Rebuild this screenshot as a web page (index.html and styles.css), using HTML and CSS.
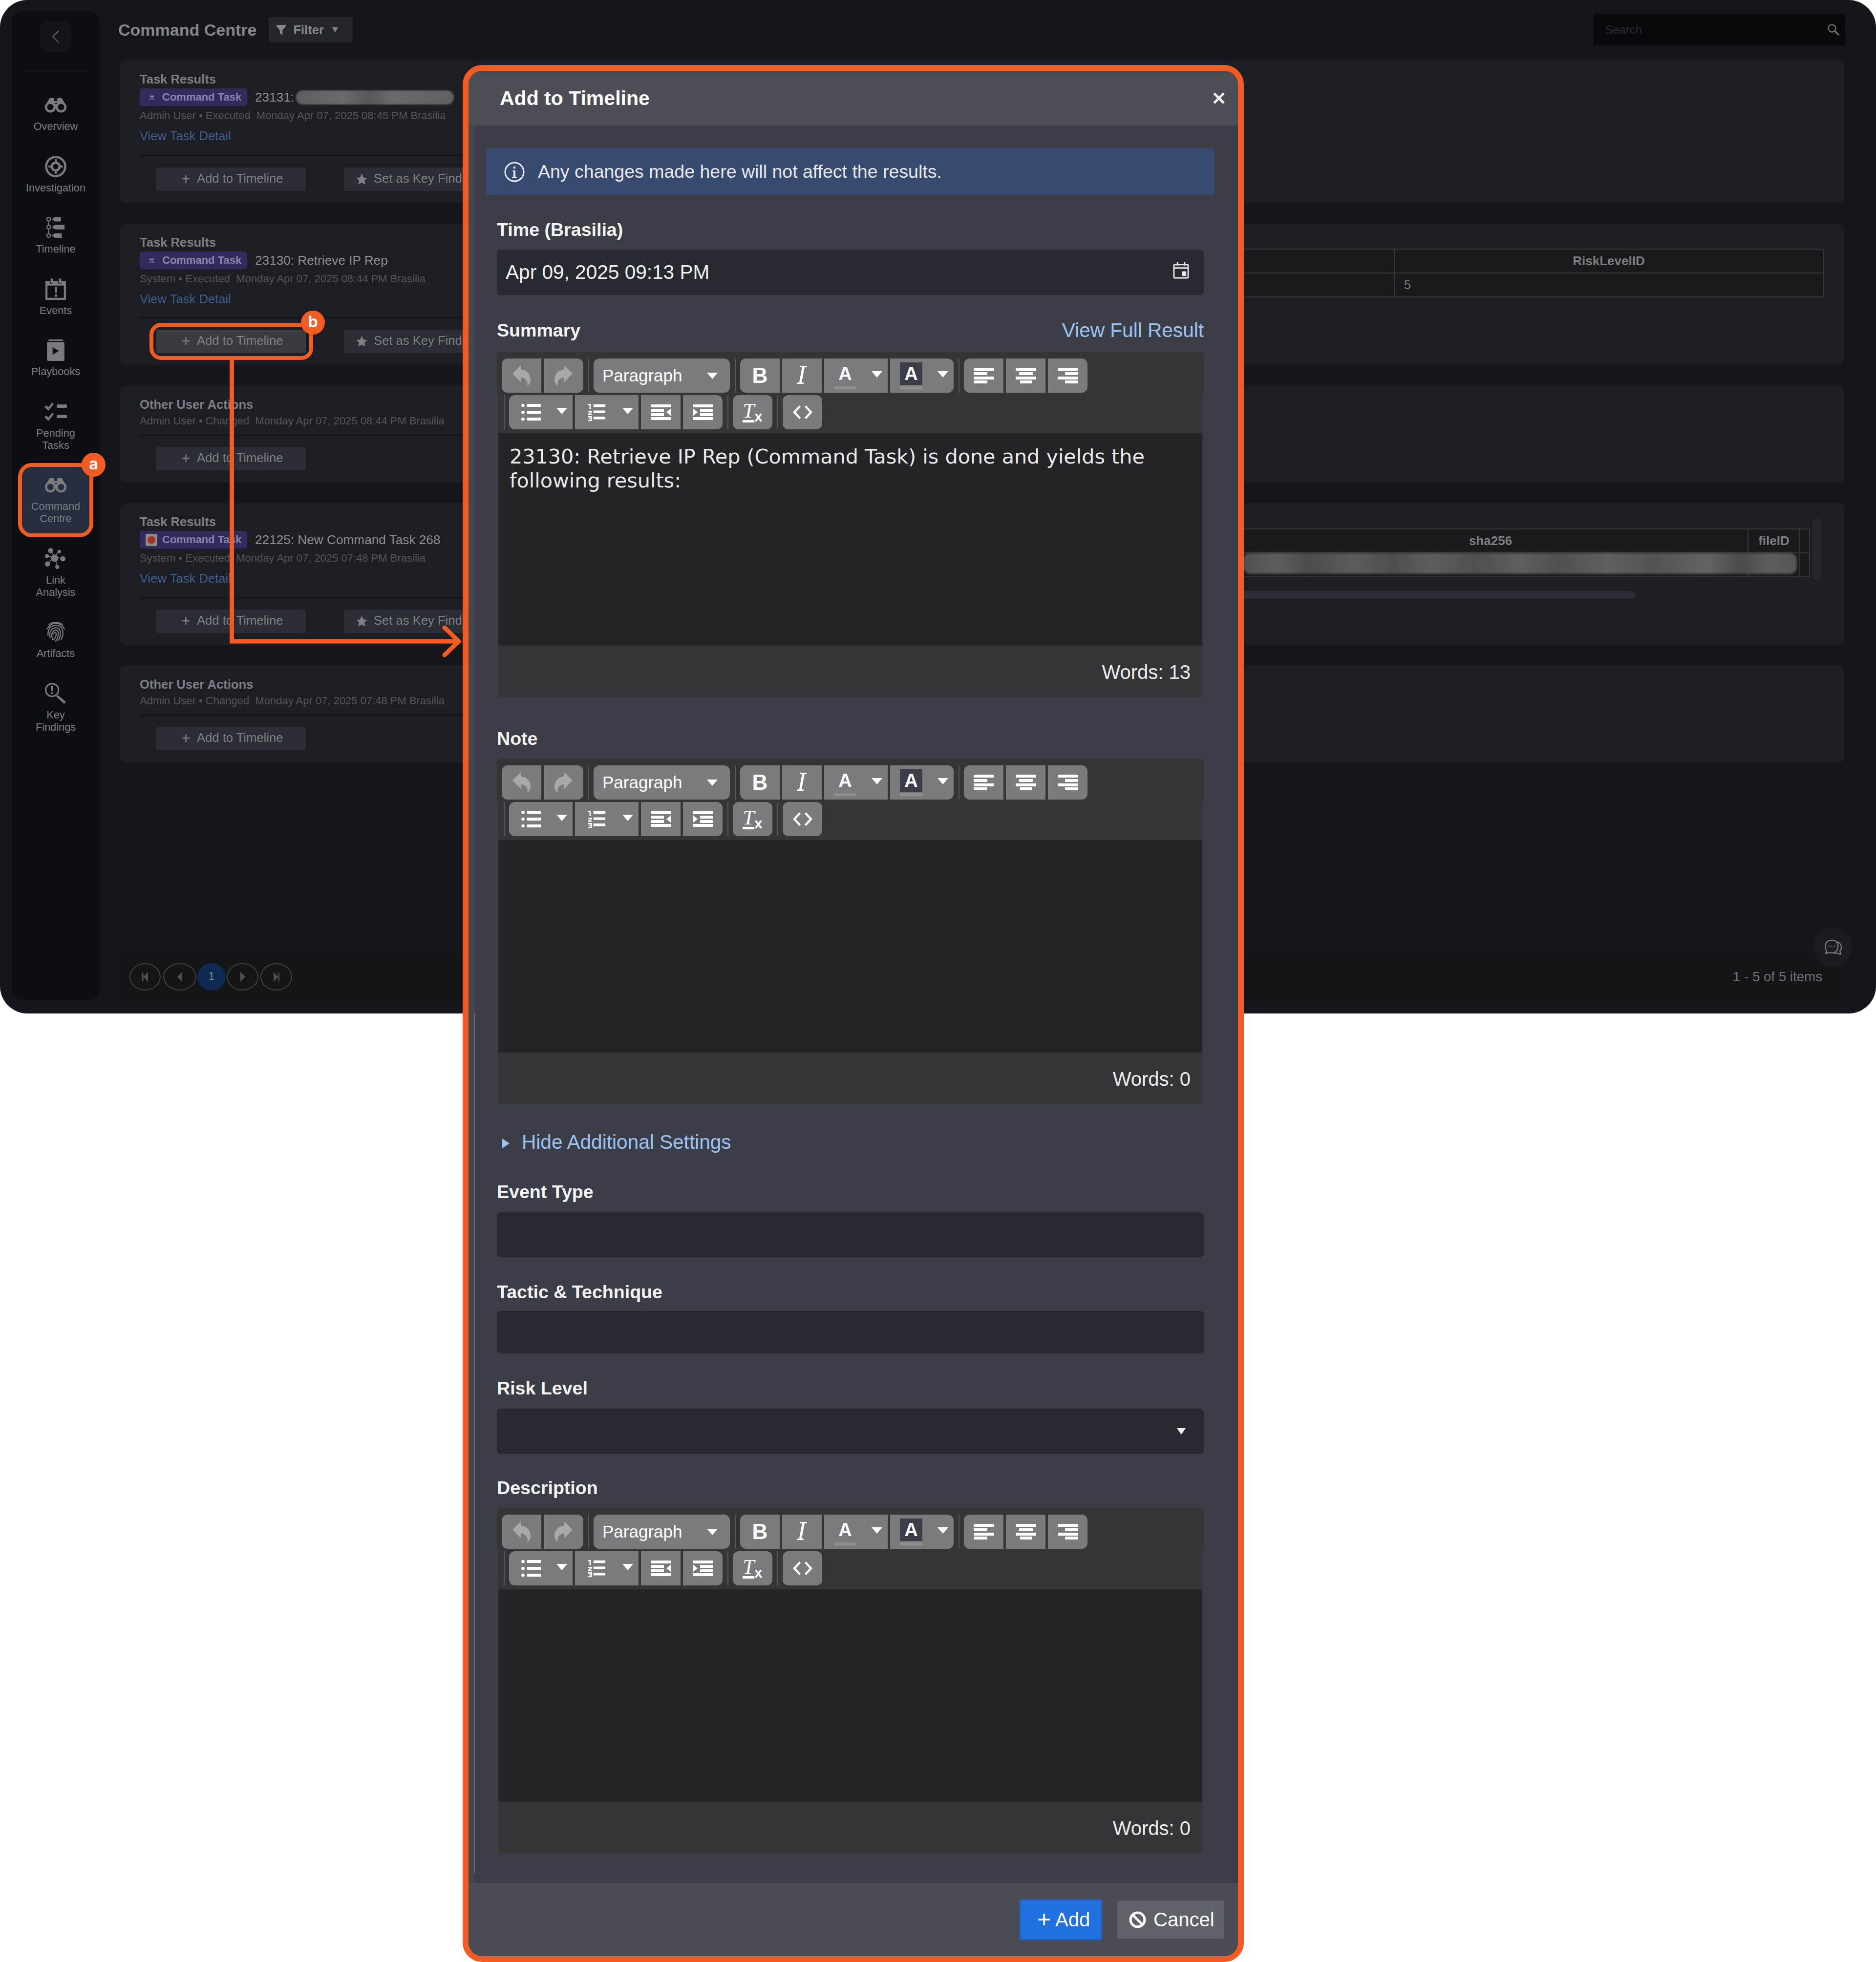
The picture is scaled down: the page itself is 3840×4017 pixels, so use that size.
FILE: index.html
```html
<!DOCTYPE html>
<html lang="en">
<head>
<meta charset="utf-8">
<title>Add to Timeline</title>
<link rel="stylesheet" href="styles.css">
</head>
<body>
<svg class="defs" width="0" height="0" aria-hidden="true">
  <symbol id="i-bino" viewBox="0 0 44 30"><path d="M3 14 9 3q1-2 4-2h3q3 0 3 3v3h6V4q0-3 3-3h3q3 0 4 2l6 11-6-2-7 1-1-2h-6l-1 2-7-1z"/><circle cx="11.500" cy="19" r="8.500" fill="none" stroke="currentColor" stroke-width="4.500"/><circle cx="32.500" cy="19" r="8.500" fill="none" stroke="currentColor" stroke-width="4.500"/><path d="M19 13h6v6h-6z"/></symbol>
  <symbol id="i-target" viewBox="0 0 44 44"><circle cx="22" cy="22" r="19.500" fill="none" stroke="currentColor" stroke-width="4.500"/><circle cx="22" cy="22" r="8" fill="none" stroke="currentColor" stroke-width="5"/><path d="M22 7v8M22 29v8M7 22h8M29 22h8" stroke="currentColor" stroke-width="4"/></symbol>
  <symbol id="i-timeline" viewBox="0 0 42 46"><g fill="none" stroke="currentColor" stroke-width="2.500"><circle cx="6" cy="5" r="4"/><circle cx="6" cy="22" r="4"/><circle cx="6" cy="40" r="4"/><path d="M6 9v9M6 26v10"/></g><path d="M13 5l6-5h13v10H19zM13 22l6-5h21v10H19zM13 40l6-5h15v10H19z"/></symbol>
  <symbol id="i-cal" viewBox="0 0 40 42"><path fill-rule="evenodd" d="M0 5h9v5h6V5h10v5h6V5h9v37H0zM4 14v24h32V14z"/><rect x="10" y="0" width="5" height="9" rx="2.500"/><rect x="26" y="0" width="5" height="9" rx="2.500"/><path d="M18 17h5l-1 11h-3zM18 31h5v5h-5z"/></symbol>
  <symbol id="i-book" viewBox="0 0 34 42"><path d="M3 0h28v3H3z"/><path fill-rule="evenodd" d="M2 5h30q2 0 2 2v33q0 2-2 2H3q-3 0-3-3V7q0-2 2-2zM11 15v15l12-7.500z"/></symbol>
  <symbol id="i-pending" viewBox="0 0 46 38"><path d="M0 9l4-3 4 4 8-10 3 3-11 14zM0 30l4-3 4 4 8-10 3 3-11 14z"/><rect x="25" y="4" width="21" height="7" rx="2"/><rect x="25" y="25" width="21" height="7" rx="2"/></symbol>
  <symbol id="i-link" viewBox="0 0 42 42"><g stroke="currentColor" stroke-width="1.500"><path d="M19 17 11 5M19 17 28 5M19 17 4 16M19 17 35 21M19 17 5 30M19 17 24 36"/></g><circle cx="19" cy="20" r="7"/><circle cx="11" cy="5" r="5"/><circle cx="28" cy="7" r="3.500"/><circle cx="4" cy="16" r="4"/><circle cx="35" cy="21" r="5"/><circle cx="5" cy="31" r="5"/><circle cx="24" cy="37" r="4"/></symbol>
  <symbol id="i-finger" viewBox="0 0 36 42"><g fill="none" stroke="currentColor" stroke-width="2.200" stroke-linecap="round"><path d="M5 6Q18-2 31 6"/><path d="M1 15Q8 4 18 4q11 0 17 11"/><path d="M3 27Q2 9 18 8q15 0 14 18-1 6-3 9"/><path d="M7 32Q4 14 18 12.500 28 13 27 25q0 6-4 13"/><path d="M12 36Q7 20 18 17q6 1 5 8 0 7-5 14"/><path d="M14 24q3-5 5 0 0 7-5 12"/></g></symbol>
  <symbol id="i-key" viewBox="0 0 42 42"><circle cx="14" cy="14" r="12.500" fill="none" stroke="currentColor" stroke-width="3"/><path d="M25 24l16 13-3.500 4L22 27z"/><path d="M12 6h4l-.500 10h-3zM12 18.500h4V22h-4z"/></symbol>
  <symbol id="i-undo" viewBox="0 0 37 42"><path d="M0 17 17 0v9c12 0 20 9 20 21 0 5-3 10-7 12 3-9-3-17-13-17v9z"/></symbol>
  <symbol id="i-redo" viewBox="0 0 37 42"><path d="M37 17 20 0v9C8 9 0 18 0 30c0 5 3 10 7 12-3-9 3-17 13-17v9z"/></symbol>
  <symbol id="i-left" viewBox="0 0 42 32"><path d="M0 0h42v6H0zM0 9h28v6H0zM0 18h42v6H0zM0 26h28v6H0z"/></symbol>
  <symbol id="i-center" viewBox="0 0 42 32"><path d="M0 0h42v6H0zM7 9h28v6H7zM0 18h42v6H0zM9 26h24v6H9z"/></symbol>
  <symbol id="i-right" viewBox="0 0 42 32"><path d="M0 0h42v6H0zM15 9h27v6H15zM0 18h42v6H0zM15 26h27v6H15z"/></symbol>
  <symbol id="i-ul" viewBox="0 0 40 36"><circle cx="3.500" cy="4" r="3.300"/><circle cx="3.500" cy="18" r="3.300"/><circle cx="3.500" cy="32" r="3.300"/><path d="M12 1h28v6H12zM12 15h28v6H12zM12 29h28v6H12z"/></symbol>
  <symbol id="i-ol" viewBox="0 0 40 40"><path d="M0 1h6v12H3V4H0zM0 17h9v2l-5 5h5v2H0v-2l5-5H0zM0 29h9v11H0v-2h6v-2H2v-2h4v-2H0z"/><path d="M12 2h27v6H12zM12 16h27v6H12zM12 30h27v6H12z"/></symbol>
  <symbol id="i-out" viewBox="0 0 42 32"><path d="M0 0h42v6H0zM0 9h27v6H0zM0 18h27v6H0zM0 26h42v6H0zM42 8v16L32 16z"/></symbol>
  <symbol id="i-in" viewBox="0 0 42 32"><path d="M0 0h42v6H0zM15 9h27v6H15zM15 18h27v6H15zM0 26h42v6H0zM0 8v16l10-8z"/></symbol>
  <symbol id="i-code" viewBox="0 0 40 28"><path d="M13 0l3 3L6 14l10 11-3 3L0 14zM27 0l-3 3 10 11-10 11 3 3 13-14z"/></symbol>
  <symbol id="i-star" viewBox="0 0 24 24"><path d="M12 0l3.600 8 8.400 1-6.200 5.700 1.700 8.600-7.500-4.300-7.500 4.300 1.700-8.600L0 9l8.400-1z"/></symbol>
  <symbol id="i-funnel" viewBox="0 0 20 22"><path d="M0 0h20v3l-7 8v11l-6-4v-7L0 3z"/></symbol>
</svg>

<div class="app">
  <aside class="sidebar">
    <div class="back"><svg class="back-ico" viewBox="0 0 16 28"><path d="M14 2 2 14l12 12" fill="none" stroke="currentColor" stroke-width="2.200"/></svg></div>
    <div class="side-rule"></div>
    <nav class="nav">
      <a class="nav-item"><svg class="nav-ico"><use href="#i-bino"/></svg><span>Overview</span></a>
      <a class="nav-item"><svg class="nav-ico"><use href="#i-target"/></svg><span>Investigation</span></a>
      <a class="nav-item"><svg class="nav-ico"><use href="#i-timeline"/></svg><span>Timeline</span></a>
      <a class="nav-item"><svg class="nav-ico"><use href="#i-cal"/></svg><span>Events</span></a>
      <a class="nav-item"><svg class="nav-ico"><use href="#i-book"/></svg><span>Playbooks</span></a>
      <a class="nav-item"><svg class="nav-ico"><use href="#i-pending"/></svg><span>Pending<br>Tasks</span></a>
      <a class="nav-item nav-item--active"><svg class="nav-ico"><use href="#i-bino"/></svg><span>Command<br>Centre</span><b class="pin pin--a">a</b></a>
      <a class="nav-item"><svg class="nav-ico"><use href="#i-link"/></svg><span>Link<br>Analysis</span></a>
      <a class="nav-item"><svg class="nav-ico"><use href="#i-finger"/></svg><span>Artifacts</span></a>
      <a class="nav-item"><svg class="nav-ico"><use href="#i-key"/></svg><span>Key<br>Findings</span></a>
    </nav>
  </aside>

  <main class="main">
    <header class="topbar">
      <h1 class="page-title">Command Centre</h1>
      <button class="filter"><svg class="filter-ico"><use href="#i-funnel"/></svg><span>Filter</span><i class="filter-caret"></i></button>
      <div class="search"><span>Search</span><svg class="search-ico" viewBox="0 0 26 26"><circle cx="10" cy="10" r="7.500" fill="none" stroke="currentColor" stroke-width="2.500"/><path d="M15 15l9 9" stroke="currentColor" stroke-width="3.500"/></svg></div>
    </header>

    <section class="cards">
      <article class="card card--one">
        <div class="card-left">
          <div class="card-title">Task Results</div>
          <div class="badge-row"><span class="badge"><i class="badge-mark">⌘</i>Command Task</span><span class="task-name">23131:</span><span class="blur-name"></span></div>
          <div class="meta">Admin User • Executed&nbsp; Monday Apr 07, 2025 08:45 PM Brasilia</div>
          <a class="detail">View Task Detail</a>
          <div class="card-rule"></div>
          <div class="actions"><button class="act"><span class="plus">+</span>Add to Timeline</button><button class="act act--key"><svg class="star"><use href="#i-star"/></svg>Set as Key Findings</button></div>
        </div>
      </article>

      <article class="card card--two">
        <div class="card-left">
          <div class="card-title">Task Results</div>
          <div class="badge-row"><span class="badge"><i class="badge-mark">⌘</i>Command Task</span><span class="task-name">23130: Retrieve IP Rep</span></div>
          <div class="meta">System • Executed&nbsp; Monday Apr 07, 2025 08:44 PM Brasilia</div>
          <a class="detail">View Task Detail</a>
          <div class="card-rule"></div>
          <div class="actions"><button class="act act--hot"><span class="plus">+</span>Add to Timeline<b class="pin pin--b">b</b></button><button class="act act--key"><svg class="star"><use href="#i-star"/></svg>Set as Key Findings</button></div>
        </div>
        <div class="card-right">
          <table class="grid grid--risk">
            <colgroup><col class="c-a"><col class="c-b"></colgroup>
            <tr><th></th><th>RiskLevelID</th></tr>
            <tr><td></td><td>5</td></tr>
          </table>
        </div>
      </article>

      <article class="card card--short">
        <div class="card-left">
          <div class="card-title">Other User Actions</div>
          <div class="meta meta--tight">Admin User • Changed&nbsp; Monday Apr 07, 2025 08:44 PM Brasilia</div>
          <div class="card-rule"></div>
          <div class="actions"><button class="act"><span class="plus">+</span>Add to Timeline</button></div>
        </div>
      </article>

      <article class="card card--four">
        <div class="card-left">
          <div class="card-title">Task Results</div>
          <div class="badge-row"><span class="badge"><i class="badge-logo"></i>Command Task</span><span class="task-name">22125: New Command Task 268</span></div>
          <div class="meta">System • Executed&nbsp; Monday Apr 07, 2025 07:48 PM Brasilia</div>
          <a class="detail">View Task Detail</a>
          <div class="card-rule"></div>
          <div class="actions"><button class="act"><span class="plus">+</span>Add to Timeline</button><button class="act act--key"><svg class="star"><use href="#i-star"/></svg>Set as Key Findings</button></div>
        </div>
        <div class="card-right card-right--scroll">
          <div class="table-wrap">
            <table class="grid grid--sha">
              <colgroup><col class="c-1"><col class="c-2"><col class="c-3"><col class="c-4"></colgroup>
              <tr><th></th><th>sha256</th><th>fileID</th><th></th></tr>
              <tr><td></td><td></td><td></td><td></td></tr>
            </table>
            <span class="blur-row"></span>
            <div class="hscroll"></div>
          </div>
          <div class="vscroll"></div>
        </div>
      </article>

      <article class="card card--short">
        <div class="card-left">
          <div class="card-title">Other User Actions</div>
          <div class="meta meta--tight">Admin User • Changed&nbsp; Monday Apr 07, 2025 07:48 PM Brasilia</div>
          <div class="card-rule"></div>
          <div class="actions"><button class="act"><span class="plus">+</span>Add to Timeline</button></div>
        </div>
      </article>
    </section>

    <footer class="pager">
      <button class="pg pg--first"><svg class="pg-ico" viewBox="0 0 14 24"><path d="M0 2h3v20H0zM14 0v24L3 12z"/></svg></button>
      <button class="pg pg--prev"><svg class="pg-ico" viewBox="0 0 14 24"><path d="M13 0v24L1 12z"/></svg></button>
      <button class="pg pg--on">1</button>
      <button class="pg pg--next"><svg class="pg-ico" viewBox="0 0 14 24"><path d="M1 0v24l12-12z"/></svg></button>
      <button class="pg pg--last"><svg class="pg-ico" viewBox="0 0 14 24"><path d="M11 2h3v20h-3zM0 0v24l11-12z"/></svg></button>
      <span class="count">1 - 5 of 5 items</span>
    </footer>
  </main>
</div>

<div class="chat"><svg class="chat-ico" viewBox="0 0 38 34"><g fill="none" stroke="currentColor" stroke-width="2.200" stroke-linejoin="round"><path d="M16 2C8 2 2 7 2 15c0 4 1 7 3 9l-2 6 8-2c2 1 3 1 5 1 8 0 13-6 13-14S24 2 16 2z"/><path d="M26 5c6 2 10 6 10 12 0 3-1 6-3 8l2 7-8-3c-3 1-8 0-11-1"/></g><circle cx="10" cy="15" r="1.300"/><circle cx="16" cy="15" r="1.300"/><circle cx="22" cy="15" r="1.300"/></svg></div>

<svg class="connector" viewBox="0 0 3840 2075" aria-hidden="true"><path d="M474.500 737V1313H938M910 1285l29 28-29 28" fill="none" stroke="#f25c22" stroke-width="9" stroke-linecap="round"/></svg>

<section class="modal">
  <header class="modal-head"><h2 class="modal-title">Add to Timeline</h2><svg class="close" viewBox="0 0 26 24"><path d="M3 2l20 20M23 2 3 22" stroke="currentColor" stroke-width="5"/></svg></header>
  <div class="modal-body">
    <div class="scroll">
      <div class="alert"><svg class="info" viewBox="0 0 42 42"><circle cx="21" cy="21" r="19" fill="none" stroke="currentColor" stroke-width="3"/><path d="M19 10h4v4h-4zM17 18h6v13h3v2H16v-2h3V20h-2z"/></svg><span>Any changes made here will not affect the results.</span></div>

      <label class="lbl lbl--time">Time (Brasilia)</label>
      <div class="input input--time"><span>Apr 09, 2025 09:13 PM</span><svg class="cal" viewBox="0 0 36 36"><g fill="none" stroke="currentColor" stroke-width="3"><rect x="3" y="6" width="30" height="28" rx="2"/><path d="M3 13h30"/></g><path d="M9 0h3v8H9zM24 0h3v8h-3zM20 20h9v10h-9z"/></svg></div>

      <div class="lbl-row"><label class="lbl lbl--plain">Summary</label><a class="link">View Full Result</a></div>
      <div class="editor editor--summary">
        <div class="tb tb-1">
          <button class="btn btn--l"><svg class="ico ico--dim"><use href="#i-undo"/></svg></button><button class="btn btn--r"><svg class="ico ico--dim"><use href="#i-redo"/></svg></button><i class="sep"></i>
          <button class="btn btn--select btn--l btn--r"><span>Paragraph</span><i class="caret"></i></button><i class="sep"></i>
          <button class="btn btn--l glyph-b">B</button><button class="btn glyph-i">I</button><button class="btn btn--split"><span class="a-col"><b class="a-glyph">A</b><i class="a-bar"></i></span><i class="caret"></i></button><button class="btn btn--split btn--r"><span class="a-col"><b class="a-glyph a-glyph--box">A</b><i class="a-bar"></i></span><i class="caret"></i></button><i class="sep"></i>
          <button class="btn btn--l"><svg class="ico ico--w"><use href="#i-left"/></svg></button><button class="btn"><svg class="ico ico--w"><use href="#i-center"/></svg></button><button class="btn btn--r"><svg class="ico ico--w"><use href="#i-right"/></svg></button>
        </div>
        <div class="tb tb-2">
          <i class="sep sep--lead"></i>
          <button class="btn btn--split btn--l"><svg class="ico ico--w ico--list"><use href="#i-ul"/></svg><i class="caret"></i></button><button class="btn btn--split"><svg class="ico ico--w ico--list"><use href="#i-ol"/></svg><i class="caret"></i></button><button class="btn"><svg class="ico ico--w"><use href="#i-out"/></svg></button><button class="btn btn--r"><svg class="ico ico--w"><use href="#i-in"/></svg></button><i class="sep"></i>
          <button class="btn btn--l btn--r glyph-tx"><span class="tx-t">T</span><span class="tx-x">x</span></button><i class="sep"></i>
          <button class="btn btn--l btn--r"><svg class="ico ico--code"><use href="#i-code"/></svg></button>
        </div>
        <div class="edit-area">23130: Retrieve IP Rep (Command Task) is done and yields the following results:</div>
        <div class="status">Words: 13</div>
      </div>

      <label class="lbl lbl--note">Note</label>
      <div class="editor">
        <div class="tb tb-1">
          <button class="btn btn--l"><svg class="ico ico--dim"><use href="#i-undo"/></svg></button><button class="btn btn--r"><svg class="ico ico--dim"><use href="#i-redo"/></svg></button><i class="sep"></i>
          <button class="btn btn--select btn--l btn--r"><span>Paragraph</span><i class="caret"></i></button><i class="sep"></i>
          <button class="btn btn--l glyph-b">B</button><button class="btn glyph-i">I</button><button class="btn btn--split"><span class="a-col"><b class="a-glyph">A</b><i class="a-bar"></i></span><i class="caret"></i></button><button class="btn btn--split btn--r"><span class="a-col"><b class="a-glyph a-glyph--box">A</b><i class="a-bar"></i></span><i class="caret"></i></button><i class="sep"></i>
          <button class="btn btn--l"><svg class="ico ico--w"><use href="#i-left"/></svg></button><button class="btn"><svg class="ico ico--w"><use href="#i-center"/></svg></button><button class="btn btn--r"><svg class="ico ico--w"><use href="#i-right"/></svg></button>
        </div>
        <div class="tb tb-2">
          <i class="sep sep--lead"></i>
          <button class="btn btn--split btn--l"><svg class="ico ico--w ico--list"><use href="#i-ul"/></svg><i class="caret"></i></button><button class="btn btn--split"><svg class="ico ico--w ico--list"><use href="#i-ol"/></svg><i class="caret"></i></button><button class="btn"><svg class="ico ico--w"><use href="#i-out"/></svg></button><button class="btn btn--r"><svg class="ico ico--w"><use href="#i-in"/></svg></button><i class="sep"></i>
          <button class="btn btn--l btn--r glyph-tx"><span class="tx-t">T</span><span class="tx-x">x</span></button><i class="sep"></i>
          <button class="btn btn--l btn--r"><svg class="ico ico--code"><use href="#i-code"/></svg></button>
        </div>
        <div class="edit-area"></div>
        <div class="status">Words: 0</div>
      </div>

      <a class="toggle"><i class="toggle-caret"></i>Hide Additional Settings</a>

      <label class="lbl lbl--event">Event Type</label>
      <div class="input input--event"></div>

      <label class="lbl lbl--tactic">Tactic &amp; Technique</label>
      <div class="input input--tactic"></div>

      <label class="lbl lbl--risk">Risk Level</label>
      <div class="input input--risk"><i class="select-caret"></i></div>

      <label class="lbl lbl--desc">Description</label>
      <div class="editor">
        <div class="tb tb-1">
          <button class="btn btn--l"><svg class="ico ico--dim"><use href="#i-undo"/></svg></button><button class="btn btn--r"><svg class="ico ico--dim"><use href="#i-redo"/></svg></button><i class="sep"></i>
          <button class="btn btn--select btn--l btn--r"><span>Paragraph</span><i class="caret"></i></button><i class="sep"></i>
          <button class="btn btn--l glyph-b">B</button><button class="btn glyph-i">I</button><button class="btn btn--split"><span class="a-col"><b class="a-glyph">A</b><i class="a-bar"></i></span><i class="caret"></i></button><button class="btn btn--split btn--r"><span class="a-col"><b class="a-glyph a-glyph--box">A</b><i class="a-bar"></i></span><i class="caret"></i></button><i class="sep"></i>
          <button class="btn btn--l"><svg class="ico ico--w"><use href="#i-left"/></svg></button><button class="btn"><svg class="ico ico--w"><use href="#i-center"/></svg></button><button class="btn btn--r"><svg class="ico ico--w"><use href="#i-right"/></svg></button>
        </div>
        <div class="tb tb-2">
          <i class="sep sep--lead"></i>
          <button class="btn btn--split btn--l"><svg class="ico ico--w ico--list"><use href="#i-ul"/></svg><i class="caret"></i></button><button class="btn btn--split"><svg class="ico ico--w ico--list"><use href="#i-ol"/></svg><i class="caret"></i></button><button class="btn"><svg class="ico ico--w"><use href="#i-out"/></svg></button><button class="btn btn--r"><svg class="ico ico--w"><use href="#i-in"/></svg></button><i class="sep"></i>
          <button class="btn btn--l btn--r glyph-tx"><span class="tx-t">T</span><span class="tx-x">x</span></button><i class="sep"></i>
          <button class="btn btn--l btn--r"><svg class="ico ico--code"><use href="#i-code"/></svg></button>
        </div>
        <div class="edit-area"></div>
        <div class="status">Words: 0</div>
      </div>
    </div>
  </div>
  <footer class="modal-foot">
    <button class="foot-btn foot-btn--add"><span class="foot-plus">+</span>Add</button>
    <button class="foot-btn foot-btn--cancel"><svg class="ban" viewBox="0 0 34 34"><circle cx="17" cy="17" r="14" fill="none" stroke="currentColor" stroke-width="5"/><path d="M7 7l20 20" stroke="currentColor" stroke-width="5"/></svg>Cancel</button>
  </footer>
</section>
</body>
</html>
```

FILE: styles.css
```css
*, *::before, *::after { box-sizing: border-box; }
html, body { margin: 0; padding: 0; background: #fff; }
body {
  position: relative;
  width: 3840px;
  height: 4017px;
  overflow: hidden;
  font-family: "Liberation Sans", Arial, sans-serif;
}
button { font-family: inherit; border: 0; padding: 0; }
i { font-style: normal; }
.defs { position: absolute; }

/* ---------- app shell ---------- */
.app {
  display: flex;
  width: 3840px;
  height: 2075px;
  padding: 22px 65px 28px 24px;
  background: #14161b;
  border-radius: 56px;
}
.sidebar {
  position: relative;
  flex: 0 0 180px;
  display: flex;
  flex-direction: column;
  align-items: center;
  padding-top: 21px;
  background: #0d0e13;
  border-radius: 22px;
}
.back {
  width: 64px;
  height: 64px;
  display: flex;
  align-items: center;
  justify-content: center;
  background: #14151a;
  border-radius: 14px;
  color: #5f6064;
}
.back-ico { width: 16px; height: 28px; }
.side-rule { width: 140px; height: 2px; margin-top: 37px; background: #16171c; }
.nav { display: flex; flex-direction: column; gap: 44.5px; margin-top: 45px; width: 100%; }
.nav-item {
  position: relative;
  display: flex;
  flex-direction: column;
  align-items: center;
  color: #7d7e80;
  font-size: 21.76px;
  line-height: 25px;
  text-align: center;
}
.nav-ico { width: 46px; height: 44px; margin: 2px 0 10px; fill: #7b7b7d; color: #7b7b7d; }
.nav-item > span { position: relative; top: -1px; }
.nav-item--active::before {
  content: "";
  position: absolute;
  left: 13px;
  top: -21px;
  width: 154px;
  height: 152px;
  background: #252d3e;
  border: 8px solid #f25c22;
  border-radius: 28px;
}
.nav-item--active .nav-ico { position: relative; }
.pin {
  position: absolute;
  width: 49px;
  height: 49px;
  border-radius: 50%;
  background: #f25c22;
  color: #fff;
  font-family: Inter, "Liberation Sans", sans-serif;
  font-size: 32px;
  font-weight: 700;
  line-height: 46px;
  text-align: center;
}
.pin--a { left: 143px; top: -42px; }
.pin--b { right: -39px; top: -39px; z-index: 1; }

/* ---------- main column ---------- */
.main { flex: 1; display: flex; flex-direction: column; margin-left: 41px; padding-top: 7px; min-width: 0; }
.topbar { display: flex; align-items: center; height: 64px; flex: none; }
.page-title { margin: 0 0 0 -3px; font-size: 34px; font-weight: 700; color: #85868a; }
.filter {
  display: flex;
  align-items: center;
  width: 172px;
  height: 52px;
  margin-left: 25px;
  padding-left: 16px;
  background: #23262b;
  border-radius: 4px;
  color: #85868a;
  font-size: 25.6px;
  font-weight: 700;
}
.filter-ico { width: 19px; height: 21px; margin-right: 15px; fill: #85868a; }
.filter-caret {
  margin-left: 17px;
  border-top: 10px solid #85868a;
  border-left: 6px solid transparent;
  border-right: 6px solid transparent;
}
.search {
  display: flex;
  align-items: center;
  justify-content: space-between;
  width: 514px;
  height: 64px;
  margin-left: auto;
  margin-right: -1px;
  padding: 0 10px 0 23px;
  background: #08090d;
  color: #2b2d32;
  font-size: 24px;
}
.search-ico { width: 26px; height: 26px; color: #6e6f72; }

.cards { display: flex; flex-direction: column; gap: 42px; margin-top: 30px; }
.card {
  display: flex;
  padding: 24px 42px 25px 41px;
  background: #1c1e23;
  border-radius: 12px;
  overflow: hidden;
}
.card-left { flex: none; width: 900px; }
.card-title { font-size: 25.6px; line-height: 30px; font-weight: 700; color: #7e7f83; }
.badge-row { display: flex; align-items: center; margin-top: 4px; height: 36px; }
.badge {
  display: flex;
  align-items: center;
  width: 220px;
  height: 36px;
  padding-left: 12px;
  background: #312a5c;
  border-radius: 5px;
  color: #8985ad;
  font-size: 22px;
  font-weight: 700;
}
.badge-mark { width: 34px; font-family: "DejaVu Sans", sans-serif; font-size: 13px; font-weight: 400; padding-left: 6px; }
.badge-logo {
  flex: none;
  width: 24px;
  height: 25px;
  margin-right: 10px;
  background: radial-gradient(circle at 50% 50%, #9c3526 0 7px, #8f8c88 9px);
  border-radius: 3px;
}
.task-name { margin-left: 16px; font-size: 26.2px; color: #8e8f90; }
.blur-name {
  width: 323px;
  height: 29px;
  margin-left: 4px;
  border-radius: 14px;
  background: linear-gradient(90deg, #5e5e60, #6a6a6c 30%, #575759 47%, #6a6a6c 60%, #606062);
  filter: blur(1.500px);
}
.meta { margin-top: 5px; font-size: 22px; line-height: 30px; color: #54565b; }
.meta--tight { margin-top: 4px; }
.detail { display: block; margin-top: 11px; font-size: 25.6px; line-height: 30px; color: #3f608e; }
.card-rule { height: 2px; margin-top: 24px; background: #121317; }
.actions { display: flex; gap: 78px; margin-top: 24px; margin-left: 34px; }
.act {
  position: relative;
  display: flex;
  align-items: center;
  width: 306px;
  height: 48px;
  padding-left: 51px;
  padding-bottom: 3px;
  background: #2a2d33;
  border-radius: 3px;
  color: #7f8084;
  font-size: 25.6px;
}
.plus { width: 32px; font-size: 32px; line-height: 30px; text-align: left; }
.act--key { width: 320px; padding-left: 25px; }
.star { width: 23px; height: 24px; margin-right: 13px; margin-top: 3px; fill: #7f8084; }
.act--hot { background: #3a3b41; }
.act--hot::after {
  content: "";
  position: absolute;
  left: -14px;
  right: -15px;
  top: -14px;
  bottom: -14px;
  border: 8px solid #f25c22;
  border-radius: 24px;
}

.card--two { padding-top: 23px; padding-bottom: 24px; }
.card--two .card-rule { margin-top: 22px; }
.card--four .actions { margin-top: 23px; }
.card--four { padding-bottom: 24px; }
.card--four .card-title { margin-top: -1px; }
.card--short .card-rule { margin-top: 13px; }
.card--short .actions { margin-top: 23px; }

.card-right { margin-left: auto; margin-top: 28px; }
.grid { border-collapse: collapse; table-layout: fixed; background: #19191b; color: #7e7f83; font-size: 26px; }
.grid th, .grid td { height: 49px; padding: 0; border: 2px solid #38383a; }
.grid td { padding-left: 19px; font-size: 25px; }
.grid th { font-weight: 700; text-align: center; }
.grid--risk { width: 1733px; }
.grid--risk .c-a { width: 855px; }
.grid--risk .c-b { width: 878px; }
.grid--sha { width: 1703px; }
.grid--sha .c-1 { width: 523px; }
.grid--sha .c-2 { width: 1054px; }
.grid--sha .c-3 { width: 106px; }
.grid--sha .c-4 { width: 20px; }

.card-right--scroll { display: flex; align-items: flex-start; margin-right: 6px; margin-top: 28px; }
.table-wrap { position: relative; width: 1703px; }
.blur-row {
  position: absolute;
  left: 545px;
  top: 50px;
  width: 1133px;
  height: 43px;
  border-radius: 14px;
  background: linear-gradient(90deg, #505051, #5e5e5f 6%, #4c4c4d 12%, #5c5c5d 20%, #4e4e4f 27%, #5e5e5f 34%, #4f4f50 42%, #5f5f60 50%, #505051 57%, #606061 66%, #535354 74%, #636364 84%, #4a4a4b 90%, #5e5e5f 95%, #555556);
  filter: blur(2px);
}
.hscroll { width: 1348px; height: 16px; margin-top: 28px; border-radius: 8px; background: #2a2d34; }
.vscroll { width: 17px; height: 128px; margin: -22px 0 0 7px; border-radius: 8px; background: #24272d; }

.pager {
  display: flex;
  align-items: center;
  gap: 5px;
  height: 95px;
  margin-top: auto;
  padding: 0 45px 0 20px;
  background: #141517;
}
.pg {
  display: flex;
  align-items: center;
  justify-content: center;
  width: 64px;
  height: 56px;
  background: transparent;
  border: 2px solid #414247;
  border-radius: 50%;
}
.pg-ico { width: 12px; height: 22px; fill: #4e4f54; }
.pg--prev { width: 68px; }
.pg--on { width: 58px; margin: 0 -3px; background: #0f2a52; border: 0; color: #8a8a8a; font-size: 23px; }
.pg--next, .pg--last { width: 65px; }
.pg--last { margin-left: -1px; }
.count { margin-left: auto; font-size: 27.7px; color: #6e7073; }

.chat {
  position: absolute;
  left: 3712px;
  top: 1899px;
  display: flex;
  align-items: center;
  justify-content: center;
  width: 80px;
  height: 80px;
  background: #1b1c21;
  border-radius: 50%;
}
.chat-ico { width: 37px; height: 33px; color: #7e7f81; fill: #7e7f81; }

.connector { position: absolute; left: 0; top: 0; width: 3840px; height: 2075px; }

/* ---------- modal ---------- */
.modal {
  position: absolute;
  left: 947px;
  top: 133px;
  display: flex;
  flex-direction: column;
  width: 1599px;
  height: 3884px;
  border: 12px solid #f25c22;
  border-radius: 40px;
  background: #3b3e46;
  overflow: hidden;
}
.modal-head {
  flex: none;
  display: flex;
  align-items: center;
  justify-content: space-between;
  height: 112px;
  padding: 0 26px 0 64px;
  background: #4c4d55;
  color: #fff;
}
.modal-title { margin: 0; font-size: 41px; font-weight: 700; }
.close { width: 26px; height: 24px; color: #f1f1f1; }
.modal-body {
  flex: 1;
  min-height: 0;
  padding: 0 12px 20px 0;
  border-left: 12px solid #44464e;
}
.scroll {
  height: 100%;
  padding: 47px 57px 0 46px;
  background: linear-gradient(#4c4e56 0 1818px, #6e7077 1818px) 0 0 / 1px 100% no-repeat;
  border-right: 1px solid #44464e;
}
.alert {
  display: flex;
  align-items: center;
  height: 95px;
  margin: 0 -22px;
  padding-left: 37px;
  background: #374a70;
  border-radius: 4px;
  color: #e8e8ea;
  font-size: 37.5px;
}
.info { width: 42px; height: 42px; margin-right: 27px; color: #e8e8ea; fill: #e8e8ea; }
.lbl { display: block; font-size: 37.6px; line-height: 44px; font-weight: 700; color: #f3f3f4; }
.lbl--time { margin-top: 49px; margin-bottom: 19px; }
.lbl--note { margin-top: 63px; margin-bottom: 19px; }
.lbl--event { margin-top: 57px; margin-bottom: 20px; }
.lbl--tactic { margin-top: 49px; margin-bottom: 17px; }
.lbl--risk { margin-top: 49px; margin-bottom: 20px; }
.lbl--desc { margin-top: 47px; margin-bottom: 19px; }
.lbl-row { display: flex; align-items: center; justify-content: space-between; margin-top: 50px; margin-bottom: 22px; height: 44px; }
.link { font-size: 40.6px; color: #9cc3f5; }
.input {
  display: flex;
  align-items: center;
  justify-content: space-between;
  height: 92px;
  padding: 0 28px 0 18px;
  background: #282a32;
  border-radius: 8px;
  color: #f1f1f2;
  font-size: 40.6px;
}
.input--time { height: 93px; }
.input--tactic { height: 87px; }
.input--risk { height: 93px; padding-right: 37px; }
.cal { width: 35px; height: 35px; margin: -8px 1px 0 0; color: #e6e6e8; fill: #e6e6e8; }
.select-caret {
  margin-left: auto;
  border-top: 13px solid #eee;
  border-left: 9px solid transparent;
  border-right: 9px solid transparent;
}

.editor { display: flex; flex-direction: column; height: 707px; }
.tb { display: flex; align-items: center; flex: none; background: #353537; }
.tb-1 { height: 86px; padding: 14px 0 2px 10px; border-radius: 10px 10px 0 0; }
.tb-2 { height: 81px; margin: 0 3px; padding: 3px 0 8px 11px; }
.btn {
  display: flex;
  align-items: center;
  justify-content: center;
  flex: none;
  width: 81px;
  height: 70px;
  margin-right: 5px;
  background: #7b7b7d;
  color: #fff;
}
.btn--l { border-top-left-radius: 12px; border-bottom-left-radius: 12px; }
.btn--r { border-top-right-radius: 12px; border-bottom-right-radius: 12px; margin-right: 0; }
.sep { flex: none; width: 2px; height: 70px; margin: 0 9px 0 10px; background: #5a5a5c; }
.sep--lead { margin-left: 0; }
.btn--select {
  width: 279px;
  justify-content: space-between;
  padding: 0 25px 0 18px;
  font-size: 35px;
}
.caret {
  flex: none;
  border-top: 13px solid #fff;
  border-left: 11.500px solid transparent;
  border-right: 11.500px solid transparent;
}
.btn--split { width: 130px; justify-content: flex-start; padding-left: 20px; padding-right: 11px; }
.btn--split .caret { margin-left: auto; margin-top: -6px; }
.btn--split .ico--list { margin-left: 5px; }
.ico { width: 42px; height: 32px; }
.ico--dim { width: 37px; height: 42px; fill: #a9a9ab; }
.ico--w { fill: #fff; }
.ico--list { width: 40px; height: 36px; }
.ico--code { width: 40px; height: 28px; fill: #fff; }
.glyph-b { font-size: 44px; font-weight: 700; }
.glyph-i { font-family: "DejaVu Serif", "Liberation Serif", serif; font-size: 50px; font-style: italic; }
.a-col { display: flex; flex-direction: column; align-items: center; width: 46px; }
.a-glyph { display: block; width: 46px; height: 46px; font-size: 38px; line-height: 46px; text-align: center; }
.a-glyph--box { background: #3b3e48; }
.a-bar { display: block; width: 46px; height: 6px; margin-top: 3px; background: #8e8e8e; }
.glyph-tx { align-items: flex-end; padding-bottom: 14px; font-family: "Liberation Serif", serif; }
.tx-t { font-size: 43px; line-height: 38px; font-style: italic; font-weight: 400; border-bottom: 5px solid #fff; }
.tx-x { font-family: "Liberation Sans", sans-serif; font-size: 30px; font-weight: 700; line-height: 24px; }

.edit-area {
  flex: 1;
  margin: 0 3px;
  padding: 24px 23px 0;
  background: #242426;
  color: #e9e9ea;
  font-family: "DejaVu Sans", sans-serif;
  font-size: 41.3px;
  line-height: 49px;
}
.status {
  flex: none;
  height: 105px;
  margin: 0 3px;
  padding: 31px 24px 0 0;
  background: #353537;
  color: #ececed;
  font-size: 40px;
  line-height: 46px;
  text-align: right;
}

.toggle { display: flex; align-items: center; height: 46px; margin-top: 55px; margin-left: 11px; font-size: 40.6px; color: #9cc3f5; }
.toggle-caret {
  margin-right: 25px;
  margin-top: 6px;
  border-left: 15px solid #9cc3f5;
  border-top: 10px solid transparent;
  border-bottom: 10px solid transparent;
}

.modal-foot {
  flex: none;
  display: flex;
  align-items: center;
  justify-content: flex-end;
  gap: 27px;
  height: 150px;
  padding-right: 26px;
  background: #4a4b53;
}
.foot-btn {
  display: flex;
  align-items: center;
  color: #fff;
  font-size: 40px;
  border-radius: 6px;
}
.foot-btn--add {
  width: 171px;
  height: 85px;
  padding-left: 25px;
  background: #2070e0;
  border: 3px solid #2d5ca6;
}
.foot-plus { width: 46px; font-size: 48px; line-height: 46px; }
.foot-btn--cancel {
  width: 224px;
  height: 82px;
  padding-left: 25px;
  background: #5f6269;
  border: 2px solid #47484f;
}
.ban { width: 35px; height: 35px; margin-right: 15px; color: #fff; }
```
